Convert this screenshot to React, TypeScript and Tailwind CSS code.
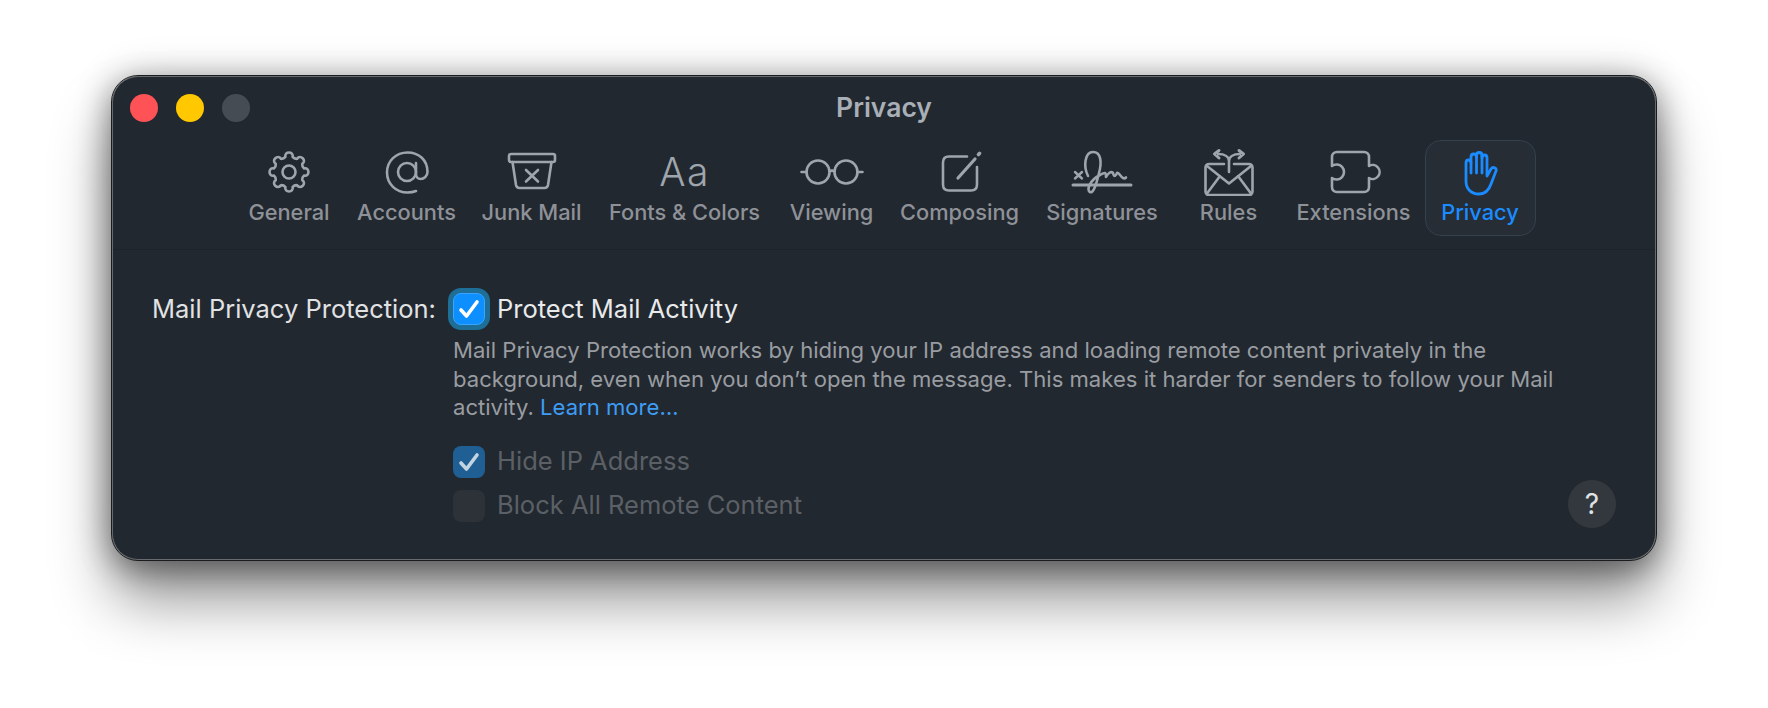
import React from 'react';

const font = { fontFamily: 'Inter, "Liberation Sans", sans-serif' };

function IconBox({ children, w = 56 }: { children: React.ReactNode; w?: number }) {
  return (
    <svg width={w} height={48} viewBox={`0 0 ${w} 48`} fill="none" stroke="currentColor" strokeWidth={2.6} strokeLinecap="round" strokeLinejoin="round">
      {children}
    </svg>
  );
}

const gearPath = (() => {
  const cx = 28, cy = 24, rOut = 21.5, rIn = 14.5, teeth = 8;
  const step = (Math.PI * 2) / teeth;
  const pt = (r: number, t: number) => `${(cx + r * Math.cos(t)).toFixed(1)} ${(cy + r * Math.sin(t)).toFixed(1)}`;
  let d = '';
  for (let i = 0; i < teeth; i++) {
    const a = i * step - Math.PI / 2;
    d += i === 0 ? `M${pt(rIn + 1, a - step * 0.3)}` : `Q${pt(rIn - 0.5, a - step * 0.5)} ${pt(rIn + 1, a - step * 0.3)}`;
    d += `C${pt(rOut, a - step * 0.3)} ${pt(rOut, a + step * 0.3)} ${pt(rIn + 1, a + step * 0.3)}`;
  }
  const last = -Math.PI / 2 - step * 0.5;
  return d + `Q${pt(rIn - 0.5, last)} ${pt(rIn + 1, -Math.PI / 2 - step * 0.3)}Z`;
})();

const tabs: { label: string; icon: React.ReactNode; w: string }[] = [
  {
    label: 'General',
    w: 'w-[113px]',
    icon: (
      <IconBox>
        <path d={gearPath} />
        <circle cx="28" cy="24" r="6.5" />
      </IconBox>
    ),
  },
  {
    label: 'Accounts',
    w: 'w-[122px]',
    icon: (
      <IconBox>
        <circle cx="28" cy="24" r="9" />
        <path d="M37 15v11c0 3 2 5 4.500 5C45 31 48.500 28 48.500 24 48.500 12 40 4.500 28.500 4.500S8 13 8 24.500 17 44.500 28.500 44.500c3 0 6-.5 8.500-1.500" />
      </IconBox>
    ),
  },
  {
    label: 'Junk Mail',
    w: 'w-[128px]',
    icon: (
      <IconBox>
        <rect x="5" y="6" width="46" height="8" rx="2" />
        <path d="M8.500 14l3.500 23c.4 2 1.500 3 3.500 3h25c2 0 3.100-1 3.500-3l3.500-23" />
        <path d="M22 22l12 11.500M34 22L22 33.500" />
      </IconBox>
    ),
  },
  {
    label: 'Fonts & Colors',
    w: 'w-[178px]',
    icon: (
      <span className="text-[39px] leading-[48px] font-light tracking-[1.500px]">Aa</span>
    ),
  },
  {
    label: 'Viewing',
    w: 'w-[116px]',
    icon: (
      <IconBox w={64}>
        <circle cx="18" cy="24" r="11.500" />
        <circle cx="46" cy="24" r="11.500" />
        <path d="M29.500 23.500c2-1.500 3-1.500 5 0M1.500 24h5M57.500 24h5" />
      </IconBox>
    ),
  },
  {
    label: 'Composing',
    w: 'w-[140px]',
    icon: (
      <IconBox>
        <path d="M35 8.500H17c-4 0-6 2-6 6v22c0 4 2 6 6 6h22c4 0 6-2 6-6V19" />
        <path d="M26 30l17-19" strokeWidth={3.200} />
        <path d="M46.500 6.500l1-1" strokeWidth={3.600} />
      </IconBox>
    ),
  },
  {
    label: 'Signatures',
    w: 'w-[145px]',
    icon: (
      <IconBox w={64}>
        <path d="M3 37h58" strokeWidth={3} />
        <path d="M5 24l7 6.500M12 24l-7 6.500" strokeWidth={2.400} />
        <path d="M18 28C13 18 15 4 23 4c8 0 9 10 6 21-2 8-5 21-9 19-4-2 0-12 10-17 5-3 6-3 6 2 2-4 5-6 7-4 1 4 2 4 4 0 2-1 3 3 6 5 1 .5 2 .5 3-.5" />
      </IconBox>
    ),
  },
  {
    label: 'Rules',
    w: 'w-[108px]',
    icon: (
      <IconBox>
        <path d="M23 16H8c-2 0-3.500 1.500-3.500 3.500v24c0 2 1.500 3.500 3.500 3.500h40c2 0 3.500-1.500 3.500-3.500v-24c0-2-1.500-3.500-3.500-3.500H33" />
        <path d="M6 18l22 17.500L50 18M6 45.500L19 28M50 45.500L37 28" />
        <path d="M28 24V13c0-4-4-7-11-7M28 13c0-4 4-7 11-7" />
        <path d="M18 2.500L13.500 6l4.500 4M38 2.500L42.500 6 38 10" strokeWidth={3} />
      </IconBox>
    ),
  },
  {
    label: 'Extensions',
    w: 'w-[142px]',
    icon: (
      <IconBox>
        <path d="M6 9c0-3 2-5 5-5h27c3 0 5 2 5 5v9A7 7 0 1 1 43 30v9c0 3-2 5-5 5H11c-3 0-5-2-5-5v-9A7.500 7.500 0 1 0 6 18z" />
      </IconBox>
    ),
  },
];

function Check({ className }: { className: string }) {
  return (
    <svg width="22" height="20" viewBox="0 0 22 20" fill="none" stroke="currentColor" strokeWidth={3.600} strokeLinecap="round" strokeLinejoin="round" className={className}>
      <path d="M3 11l5.500 6L19 3" />
    </svg>
  );
}

export default function App() {
  return (
    <div className="min-h-[708px] bg-white pt-[76px] pl-[112px] overflow-hidden" style={font}>
      <div className="w-[1544px] h-[484px] flex flex-col rounded-[26px] bg-[#22282f] border border-[#666a6e] outline outline-[#1a1c1f] shadow-[0_40px_60px_rgba(0,0,0,0.42),0_8px_30px_rgba(0,0,0,0.35),0_0_40px_rgba(0,0,0,0.2)] overflow-hidden">
        {/* title bar */}
        <div className="relative h-[63px] shrink-0 flex items-center justify-center">
          <div className="absolute left-[17px] top-[17px] flex gap-[18px]">
            <div className="w-[28px] h-[28px] rounded-full bg-[#ff5257]" />
            <div className="w-[28px] h-[28px] rounded-full bg-[#ffc800]" />
            <div className="w-[28px] h-[28px] rounded-full bg-[#464c54]" />
          </div>
          <span className="text-[26.500px] leading-[32px] -mt-[4px] font-semibold text-[#a9afb7]">Privacy</span>
        </div>

        {/* toolbar */}
        <div className="h-[110px] shrink-0 flex justify-center border-b border-[#1e2329]">
          {tabs.map((t) => (
            <div key={t.label} className={`${t.w} h-[96px] flex flex-col items-center pt-[8px] text-[#9fa5ad]`}>
              <div className="h-[48px] flex items-center justify-center">{t.icon}</div>
              <span className="text-[21.800px] leading-[33px] font-medium text-[#8e9298] whitespace-nowrap">{t.label}</span>
            </div>
          ))}
          <div className="w-[111px] h-[96px] flex flex-col items-center pt-[7px] rounded-[16px] bg-[#262d34] border border-[#33414e] text-[#1a8cff]">
            <div className="h-[48px] flex items-center justify-center">
              <svg width="36" height="48" viewBox="0 0 36 48" fill="none" stroke="currentColor" strokeWidth={2.800} strokeLinecap="round" strokeLinejoin="round">
                <path d="M4 33V15c0-4 5-4 5 0V9c0-4 5.500-4 5.500 0V7.500c0-4 5.500-4 5.500 0V10c0-4 5-4 5 0v18l4-7c2-3 6-1 5 2l-5 13c-2 6-6 10-12 10-8 0-13-5-13-13z" />
                <path d="M9 15v10M14.500 9v16M20 7.500V25" />
              </svg>
            </div>
            <span className="text-[21.800px] leading-[33px] font-medium whitespace-nowrap">Privacy</span>
          </div>
        </div>

        {/* body */}
        <div className="relative flex-1 flex pt-[37px] pl-[39px]">
          <span className="w-[301px] text-[25.500px] leading-[44px] text-[#e0e2e4] whitespace-nowrap">Mail Privacy Protection:</span>
          <div className="flex flex-col">
            <div className="flex items-center gap-[12px] h-[44px]">
              <div className="w-[32px] h-[32px] rounded-[8px] bg-[#0d8fff] border border-[#3aa4ff] ring-[5px] ring-[#1d6f98] flex items-center justify-center">
                <Check className="text-white" />
              </div>
              <span className="text-[25.500px] text-[#e8eaec] whitespace-nowrap">Protect Mail Activity</span>
            </div>
            <p className="w-[1125px] mt-[5px] text-[22.100px] leading-[28.500px] text-[#999da2]">
              Mail Privacy Protection works by hiding your IP address and loading remote content privately in the background, even when you don’t open the message. This makes it harder for senders to follow your Mail activity. <span className="text-[#3d9df5]">Learn more…</span>
            </p>
            <div className="flex items-center gap-[12px] h-[32px] mt-[24px]">
              <div className="w-[32px] h-[32px] rounded-[8px] bg-[#1f5f93] flex items-center justify-center">
                <Check className="text-[#c2d4e2]" />
              </div>
              <span className="text-[25.500px] text-[#5b6066] whitespace-nowrap">Hide IP Address</span>
            </div>
            <div className="flex items-center gap-[12px] h-[32px] mt-[12px]">
              <div className="w-[32px] h-[32px] rounded-[8px] bg-[#2d3138]" />
              <span className="text-[25.500px] text-[#5b6066] whitespace-nowrap">Block All Remote Content</span>
            </div>
          </div>
          <div className="absolute right-[39px] bottom-[31px] w-[48px] h-[48px] rounded-full bg-[#33383e] flex items-center justify-center text-[28px] text-[#dfe1e3]">?</div>
        </div>
      </div>
    </div>
  );
}
